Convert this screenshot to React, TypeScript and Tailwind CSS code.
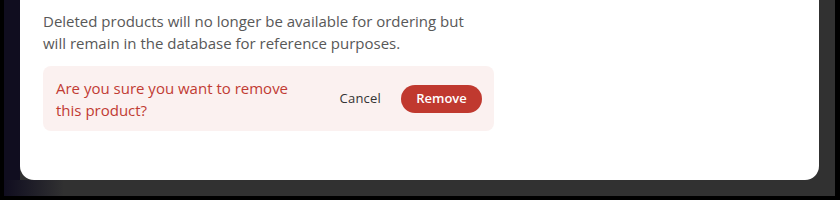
import React from "react";

export default function App() {
  return (
    <div className="w-[840px] h-[200px] bg-black overflow-hidden" style={{ fontFamily: '"Open Sans", "Noto Sans", sans-serif' }}>
      <div className="w-[835px] h-[196px] bg-[#313131] flex">
        <div className="w-[4px] h-full bg-black" />
        <div className="flex flex-col">
          <div className="flex">
            <div className="w-[16px] h-[180px] bg-[#100d1f]" />
            <div className="w-[799px] h-[180px] bg-white rounded-b-[14px] pl-[23px] pt-[10px]">
              <p className="text-[15px] leading-[22px] text-[#585858]">
                Deleted products will no longer be available for ordering but
                <br />
                will remain in the database for reference purposes.
              </p>
              <div className="mt-[12px] w-[451px] h-[65px] bg-[#fbf1f0] rounded-[8px] pl-[13px] pr-[12px] flex items-center justify-between">
                <p className="text-[15px] leading-[22px] text-[#c13b33]">
                  Are you sure you want to remove
                  <br />
                  this product?
                </p>
                <div className="flex items-center gap-[20px]">
                  <button className="text-[13px] font-medium text-[#333333] tracking-[0.2px]">Cancel</button>
                  <button className="h-[28px] w-[81px] rounded-full bg-[#c0392f] text-white text-[13px] font-semibold">
                    Remove
                  </button>
                </div>
              </div>
            </div>
          </div>
          <div className="h-[16px] w-[60px] bg-gradient-to-r from-[#100d1f] to-[#313131]" />
        </div>
      </div>
    </div>
  );
}
